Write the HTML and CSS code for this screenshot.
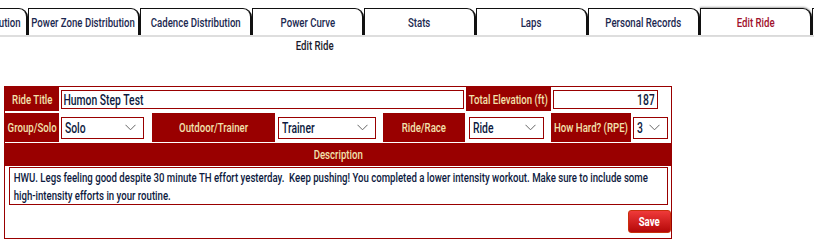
FILE: index.html
```html
<!DOCTYPE html>
<html lang="en">
<head>
    <meta charset="UTF-8">
    <meta name="viewport" content="width=device-width, initial-scale=1.0">
    <title>Edit Ride</title>
    <link rel="stylesheet" href="styles.css">
</head>
<body>
    <div id="tabs">
        <div class="tab"><span class="sq">Heart Rate Distribution</span></div>
        <div class="tab"><span class="sq">Power Zone Distribution</span></div>
        <div class="tab"><span class="sq">Cadence Distribution</span></div>
        <div class="tab"><span class="sq">Power Curve</span></div>
        <div class="tab"><span class="sq">Stats</span></div>
        <div class="tab"><span class="sq">Laps</span></div>
        <div class="tab"><span class="sq">Personal Records</span></div>
        <div class="tab active"><span class="sq">Edit Ride</span></div>
        <div class="tab"><span class="sq">Segments</span></div>
    </div>
    <div class="page-title"><span class="sq">Edit Ride</span></div>
    <form id="ride-form">
        <div class="row row-top">
            <label class="cell-label w-title" for="title"><span class="sq">Ride Title</span></label>
            <span class="box b-title"><input type="text" id="title" class="fld" value="Humon Step Test"></span>
            <label class="cell-label w-elev" for="elev"><span class="sq">Total Elevation (ft)</span></label>
            <span class="box b-elev"><input type="text" id="elev" class="fld right" value="187"></span>
        </div>
        <div class="row row-mid">
            <label class="cell-label w-title" for="group"><span class="sq">Group/Solo</span></label>
            <span class="box pick b-group"><select id="group" class="fld"><option>Solo</option><option>Group</option></select></span>
            <label class="cell-label w-where" for="where"><span class="sq">Outdoor/Trainer</span></label>
            <span class="box pick b-where"><select id="where" class="fld"><option>Outdoor</option><option selected>Trainer</option></select></span>
            <label class="cell-label w-race" for="race"><span class="sq">Ride/Race</span></label>
            <span class="box pick b-race"><select id="race" class="fld"><option>Ride</option><option>Race</option></select></span>
            <label class="cell-label w-rpe" for="rpe"><span class="sq">How Hard? (RPE)</span></label>
            <span class="box pick b-rpe"><select id="rpe" class="fld"><option>1</option><option>2</option><option selected>3</option><option>4</option><option>5</option></select></span>
        </div>
        <div class="cell-label desc-head"><span class="sq">Description</span></div>
        <div class="box b-desc"><textarea id="description" class="fld desc">HWU. Legs feeling good despite 30 minute TH effort yesterday.  Keep pushing! You completed a lower intensity workout. Make sure to include some high-intensity efforts in your routine.</textarea></div>
        <div class="actions">
            <button type="button" class="save-btn"><span class="sq">Save</span></button>
        </div>
    </form>
</body>
</html>
```

FILE: styles.css
```css
:root {
    --sq: 0.74;
}
body {
    margin: 0;
    font-family: Roboto, "Liberation Sans", sans-serif;
    font-weight: 500;
    font-size: 13px;
    color: #1b2850;
    background: white;
    overflow: hidden;
}
.sq {
    display: inline-block;
    white-space: nowrap;
    transform: scaleX(var(--sq));
}
#tabs {
    display: flex;
    margin-top: 8px;
    margin-left: -84px;
    border-bottom: 2px solid #dedede;
    height: 27px;
}
.tab {
    flex: 0 0 112px;
    box-sizing: border-box;
    height: 27px;
    border: 1px solid #111;
    border-right-width: 2px;
    border-bottom: none;
    border-top-right-radius: 9px;
    display: flex;
    justify-content: center;
    align-items: center;
    overflow: hidden;
    color: #1b2850;
}
.tab.active {
    color: #a0102c;
    box-shadow: 0 -1px 2px rgba(0, 0, 0, 0.35);
}
.page-title {
    width: 629px;
    height: 49px;
    display: flex;
    justify-content: center;
    line-height: 17px;
    color: #1b1b2b;
}
#ride-form {
    margin: 0 0 0 4px;
    width: 666px;
    border: 1px solid #990000;
    display: flex;
    flex-direction: column;
}
.row {
    display: flex;
    align-items: center;
}
.row-top {
    height: 24px;
}
.row-mid {
    height: 29px;
    margin-top: 2px;
}
.cell-label {
    box-sizing: border-box;
    background: #990000;
    color: #f2e2ae;
    align-self: stretch;
    display: flex;
    align-items: center;
    justify-content: center;
}
.w-title { width: 54px; }
.w-elev { width: 85px; margin-left: 2px; }
.w-where { width: 123px; margin-left: 8px; }
.w-race { width: 82px; margin-left: 7px; }
.w-rpe { width: 80px; margin-left: 7px; }
.box {
    display: block;
    box-sizing: border-box;
    border: 1px solid #990000;
    background: white;
    overflow: hidden;
}
.fld {
    display: block;
    box-sizing: border-box;
    width: calc(100% / var(--sq));
    height: 100%;
    margin: 0;
    padding: 0 2px;
    border: none;
    border-radius: 0;
    background: transparent;
    outline: none;
    font-family: inherit;
    font-weight: 500;
    font-size: 14px;
    color: #0d1a40;
    transform: scaleX(var(--sq));
    transform-origin: left center;
}
.fld.right {
    text-align: right;
    padding-right: 3px;
}
.b-title { width: 403px; height: 19px; margin: 1px 0 0 2px; }
.b-elev { width: 105px; height: 19px; margin: 1px 0 0 2px; }
.pick {
    height: 22px;
    background-image: url("data:image/svg+xml,%3Csvg xmlns='http://www.w3.org/2000/svg' width='11' height='7'%3E%3Cpath d='M0.5 0.8 L5.5 5.8 L10.5 0.8' fill='none' stroke='%23666' stroke-width='1'/%3E%3C/svg%3E");
    background-repeat: no-repeat;
    background-position: right 7px center;
}
.pick select {
    appearance: none;
    -webkit-appearance: none;
    padding: 0 4px;
    cursor: pointer;
}
.b-group { width: 83px; margin-left: 2px; }
.b-where { width: 98px; margin-left: 3px; }
.b-race { width: 75px; margin-left: 4px; }
.b-rpe { width: 35px; margin-left: 2px; }
.desc-head {
    height: 23px;
    margin-top: 1px;
}
.b-desc {
    width: 659px;
    height: 38px;
    margin: 1px 0 0 4px;
}
.desc {
    padding: 1px 5px;
    line-height: 18px;
    font-size: 13px;
    resize: none;
    overflow: hidden;
}
.actions {
    display: flex;
    justify-content: flex-end;
    padding: 5px 0;
}
.save-btn {
    width: 43px;
    height: 23px;
    border: 1px solid #c8300c;
    border-radius: 3px;
    background: linear-gradient(#ef3a3a, #b50808);
    color: white;
    font-family: inherit;
    font-weight: bold;
    font-size: 13px;
    padding: 0;
    cursor: pointer;
}
.save-btn:hover {
    background: linear-gradient(#d82a2a, #9a0000);
}
```
